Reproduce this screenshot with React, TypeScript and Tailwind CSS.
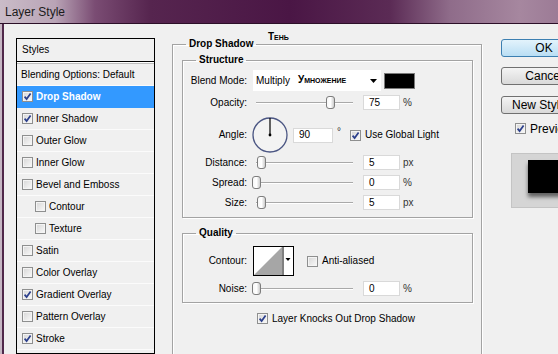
import React from "react";

type StyleRow = { label: string; on?: boolean; sub?: boolean; active?: boolean };

const styleRows: StyleRow[] = [
  { label: "Drop Shadow", on: true, active: true },
  { label: "Inner Shadow", on: true },
  { label: "Outer Glow" },
  { label: "Inner Glow" },
  { label: "Bevel and Emboss" },
  { label: "Contour", sub: true },
  { label: "Texture", sub: true },
  { label: "Satin" },
  { label: "Color Overlay" },
  { label: "Gradient Overlay", on: true },
  { label: "Pattern Overlay" },
  { label: "Stroke", on: true },
  { label: "" },
];

const Check = ({ on }: { on?: boolean }) => (
  <span className="flex h-[11px] w-[11px] shrink-0 items-center justify-center border border-[#8e8f8f] bg-linear-to-br from-[#d6d6d6] to-[#fafafa] shadow-[inset_0_0_0_1px_#f4f4f4]">
    {on && (
      <svg width="9" height="9" viewBox="0 0 9 9">
        <path d="M1.6 4.6 L3.6 7 L7.6 1.4" fill="none" stroke="#2b3f8c" strokeWidth="1.7" />
      </svg>
    )}
  </span>
);

const Thumb = () => (
  <svg width="9" height="13" viewBox="0 0 9 13">
    <defs>
      <linearGradient id="th" x1="0" y1="0" x2="1" y2="0">
        <stop offset="0" stopColor="#f6f6f6" />
        <stop offset="0.5" stopColor="#ffffff" />
        <stop offset="1" stopColor="#c4c4c4" />
      </linearGradient>
    </defs>
    <rect x="0.5" y="0.5" width="8" height="12" rx="2.5" fill="url(#th)" stroke="#7d7d7d" />
  </svg>
);

const Slider = ({ at }: { at: number }) => (
  <div className="relative ml-[5px] h-[15px] w-[108px] shrink-0">
    <div className="absolute left-[4px] top-[7px] h-[2px] w-[97px] border-t border-b border-t-[#a9a9a9] border-b-white" />
    <div className="absolute top-[1px] flex" style={{ left: at }}>
      <Thumb />
    </div>
  </div>
);

const Field = ({ value, w = "w-[37px]", ml = "ml-[3px]" }: { value: string; w?: string; ml?: string }) => (
  <div className={`${w} ${ml} flex h-[15px] shrink-0 items-center border border-[#d9d9d9] bg-white pl-[5px] leading-none`}>
    {value}
  </div>
);

const SliderRow = ({ label, at, value, unit, mt }: { label: string; at: number; value: string; unit: string; mt: string }) => (
  <div className={`${mt} flex h-[15px] items-center`}>
    <span className="w-[64px] shrink-0 text-right">{label}</span>
    <Slider at={at} />
    <Field value={value} />
    <span className="ml-[3px] text-[#333]">{unit}</span>
  </div>
);

const Legend = ({ children, ml }: { children: React.ReactNode; ml: string }) => (
  <legend className={`${ml} px-[3px] text-[10px] font-bold leading-[12px]`}>{children}</legend>
);

export default function App() {
  return (
    <div className="h-[354px] w-[558px] overflow-hidden bg-[#f0f0f0] font-['Liberation_Sans',Arial,sans-serif] text-[10px] leading-[12px] text-black">
      <div className="flex h-[23px] items-center bg-[linear-gradient(to_right,#cabcc8_0px,#b9a4b6_55px,#7a4c73_95px,#56254f_150px,#4a1645_290px,#5b2b55_390px,#8f6c8a_450px,#a6879f_520px,#9c7b96_558px)] pl-[5px] text-[12px] text-[#1b1b1b]">
        Layer Style
      </div>
      <div className="h-px bg-[#2c0f28]" />

      <div className="flex h-[330px]">
        <div className="w-[2px] shrink-0 bg-[#c6b7c4]" />
        <div className="w-[2px] shrink-0 bg-[#50284a]" />

        <div className="flex shrink-0 pl-[12px] pt-[14px]">
          {/* Styles list */}
          <div className="w-[139px] shrink-0 border border-black">
            <div className="flex h-[23px] items-center border-b border-black pl-[5px]">Styles</div>
            <div className="h-px bg-white" />
            <div className="h-px bg-[#bdbdbd]" />
            <div className="flex h-[22px] items-center border-b border-[#fbfbfb] pl-[4px]">Blending Options: Default</div>
            {styleRows.map((r, i) => (
              <div
                key={i}
                className={`flex h-[22px] items-center gap-[3px] border-b ${
                  r.active ? "border-[#3399ff] bg-[#3399ff] font-bold text-white" : "border-[#fbfbfb]"
                } ${r.sub ? "pl-[18px]" : "pl-[5px]"}`}
              >
                {r.label && <Check on={r.on} />}
                <span>{r.label}</span>
              </div>
            ))}
          </div>

          {/* Main panel */}
          <fieldset className="relative ml-[17px] h-[340px] w-[310px] shrink-0 border border-[#a3a3a3] pl-[9px] pr-[8px] shadow-[inset_1px_1px_0_#fff,1px_1px_0_#fff]">
            <Legend ml="ml-[4px]">Drop Shadow</Legend>
            <span className="absolute left-[95px] top-[-19px] text-[10px] font-bold [font-variant:small-caps]">Тень</span>

            <fieldset className="mt-[4px] border border-[#a3a3a3] pb-[7px] shadow-[inset_1px_1px_0_#fff,1px_1px_0_#fff]">
              <Legend ml="ml-[13px]">Structure</Legend>

              <div className="mt-[4px] flex h-[21px] items-center">
                <span className="w-[64px] shrink-0 text-right">Blend Mode:</span>
                <div className="relative ml-[6px] flex h-[21px] w-[128px] items-center bg-white pl-[3px]">
                  <span>Multiply</span>
                  <span className="absolute left-[45px] top-[4px] text-[10px] font-bold [font-variant:small-caps]">Умножение</span>
                  <svg className="absolute right-[4px] top-[9px]" width="7" height="4" viewBox="0 0 7 4">
                    <path d="M0 0 H7 L3.5 4 Z" fill="#000" />
                  </svg>
                </div>
                <div className="ml-[3px] h-[16px] w-[31px] border border-[#7a7a7a] bg-black" />
              </div>

              <SliderRow mt="mt-[4px]" label="Opacity:" at={74} value="75" unit="%" />

              <div className="mt-[7px] flex h-[36px] items-center">
                <span className="w-[64px] shrink-0 text-right">Angle:</span>
                <svg className="ml-[5px] shrink-0" width="36" height="36" viewBox="0 0 36 36">
                  <circle cx="18" cy="18" r="17" fill="#f3f3f3" stroke="#4b5683" strokeWidth="1.3" />
                  <line x1="18" y1="18" x2="18" y2="1" stroke="#000" strokeWidth="1.2" />
                  <circle cx="18" cy="18" r="1.4" fill="#000" />
                </svg>
                <Field value="90" w="w-[40px]" ml="ml-[5px]" />
                <span className="ml-[4px] -translate-y-[3px] text-[#333]">°</span>
                <span className="ml-[9px]">
                  <Check on />
                </span>
                <span className="ml-[4px]">Use Global Light</span>
              </div>

              <SliderRow mt="mt-[2px]" label="Distance:" at={5} value="5" unit="px" />
              <SliderRow mt="mt-[5px]" label="Spread:" at={0} value="0" unit="%" />
              <SliderRow mt="mt-[5px]" label="Size:" at={5} value="5" unit="px" />
            </fieldset>

            <fieldset className="mt-[9px] border border-[#a3a3a3] pb-[6px] shadow-[inset_1px_1px_0_#fff,1px_1px_0_#fff]">
              <Legend ml="ml-[13px]">Quality</Legend>

              <div className="mt-[7px] flex h-[30px] items-center">
                <span className="w-[64px] shrink-0 text-right">Contour:</span>
                <svg className="ml-[6px] shrink-0" width="41" height="30" viewBox="0 0 41 30">
                  <rect x="0.5" y="0.5" width="40" height="29" fill="#fff" stroke="#000" />
                  <polygon points="1,29 29,1 29,29" fill="#a6a6a6" />
                  <line x1="30" y1="0" x2="30" y2="30" stroke="#000" />
                  <path d="M32.5 12 H37.5 L35 15 Z" fill="#000" />
                </svg>
                <span className="ml-[13px]">
                  <Check />
                </span>
                <span className="ml-[4px]">Anti-aliased</span>
              </div>

              <SliderRow mt="mt-[5px]" label="Noise:" at={0} value="0" unit="%" />
            </fieldset>

            <div className="ml-[75px] mt-[10px] flex h-[11px] items-center gap-[4px]">
              <Check on />
              <span>Layer Knocks Out Drop Shadow</span>
            </div>
          </fieldset>

          {/* Buttons */}
          <div className="ml-[19px] flex w-[86px] shrink-0 flex-col text-[12px]">
            <div className="mt-px flex h-[18px] items-center justify-center rounded-[3px] border border-[#3c7fb1] bg-linear-to-b from-[#e3f3fc] to-[#b9def4]">
              OK
            </div>
            <div className="mt-[10px] flex h-[18px] items-center justify-center rounded-[3px] border border-[#707070] bg-linear-to-b from-[#f4f4f4] to-[#d9d9d9]">
              Cancel
            </div>
            <div className="mt-[11px] flex h-[18px] items-center justify-center rounded-[3px] border border-[#707070] bg-linear-to-b from-[#f4f4f4] to-[#d9d9d9]">
              New Style...
            </div>
            <div className="ml-[14px] mt-[9px] flex h-[11px] items-center gap-[4px]">
              <Check on />
              <span>Preview</span>
            </div>
            <div className="ml-[10px] mt-[19px] h-[55px] w-[70px] border border-[#c4c4c4] bg-[#d5d5d5] pl-[16px] pt-[6px]">
              <div className="h-[33px] w-[50px] bg-black shadow-[0_4px_4px_rgba(0,0,0,0.55)]" />
            </div>
          </div>
        </div>
      </div>
    </div>
  );
}
